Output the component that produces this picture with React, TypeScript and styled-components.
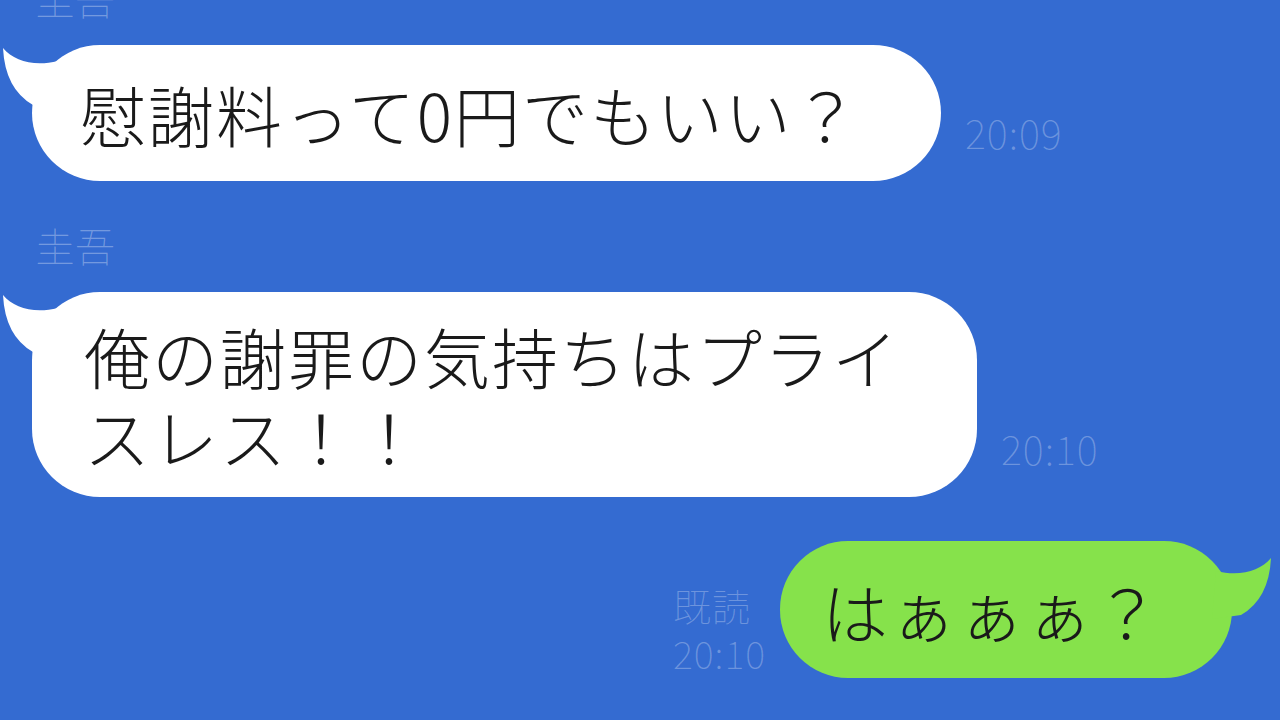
import React, { FC } from "react";
import styled, { createGlobalStyle } from "styled-components";

const Global = createGlobalStyle`
    html, body {
        margin: 0;
        padding: 0;
        width: 1280px;
        height: 720px;
        overflow: hidden;
        background: #346bd1;
    }
`

interface IBubble {
    $w: number,
    $h: number,
    $color: string,
    $padLeft: number,
}

interface ITail {
    $side: "left" | "right",
    $color: string,
}

const Tail: FC<ITail> = ({$side, $color}) => {
    return <TailSvg $side={$side} $color={$color} viewBox="0 0 70 70" width="70" height="70">
        <path d="M1 3 C 12 16, 32 22, 56 16 L 60 64 L 31 60 Q 3 44 1 3 Z" />
    </TailSvg>
}

const Chat: FC = () => {
    return <>
        <Global />
        <Page>
            <Message>
                <Name>圭吾</Name>
                <Line>
                    <Bubble $w={909} $h={136} $color="#ffffff" $padLeft={48}>
                        <Tail $side="left" $color="#ffffff" />
                        <Text>慰謝料って0円でもいい？</Text>
                    </Bubble>
                    <Time>20:09</Time>
                </Line>
            </Message>
            <Message>
                <Name>圭吾</Name>
                <Line>
                    <Bubble $w={945} $h={205} $color="#ffffff" $padLeft={52}>
                        <Tail $side="left" $color="#ffffff" />
                        <Text>俺の謝罪の気持ちはプライスレス！！</Text>
                    </Bubble>
                    <Time>20:10</Time>
                </Line>
            </Message>
            <Mine>
                <Read>
                    <span>既読</span>
                    <span>20:10</span>
                </Read>
                <Bubble $w={452} $h={137} $color="#86e24b" $padLeft={42}>
                    <Tail $side="right" $color="#86e24b" />
                    <Text>はぁぁぁ？</Text>
                </Bubble>
            </Mine>
        </Page>
    </>
}

const Page = styled.div`
    display: flex;
    flex-direction: column;
    gap: 44px;
    margin-top: -22px;
    padding: 0 48px 0 32px;
    font-family: "Noto Sans CJK JP", "Noto Sans", sans-serif;
`

const Message = styled.div`
    display: flex;
    flex-direction: column;
`

const Name = styled.div`
    font-size: 40px;
    line-height: 40px;
    font-weight: 100;
    color: rgba(255, 255, 255, 0.32);
    margin: 0 0 27px 3px;
`

const Line = styled.div`
    display: flex;
    align-items: flex-end;
    gap: 24px;
`

const Bubble = styled.div<IBubble>`
    position: relative;
    box-sizing: border-box;
    width: ${props => props.$w}px;
    height: ${props => props.$h}px;
    display: flex;
    align-items: center;
    padding: 0 30px 0 ${props => props.$padLeft}px;
    border-radius: 68px;
    background: ${props => props.$color};
`

const TailSvg = styled.svg<ITail>`
    position: absolute;
    top: ${props => props.$side === "left" ? 0 : 14}px;
    ${props => props.$side === "left" ? "left: -30px;" : "right: -40px; transform: scaleX(-1);"}
    fill: ${props => props.$color};
`

const Text = styled.div`
    position: relative;
    font-size: 66px;
    line-height: 80px;
    font-weight: 300;
    color: #1a1a1a;
    letter-spacing: 2px;
`

const Time = styled.div`
    font-size: 40px;
    line-height: 40px;
    font-weight: 100;
    color: rgba(255, 255, 255, 0.28);
    margin-bottom: 29px;
    letter-spacing: 1px;
`

const Mine = styled.div`
    display: flex;
    justify-content: flex-end;
    align-items: flex-end;
    gap: 14px;
`

const Read = styled.div`
    display: flex;
    flex-direction: column;
    gap: 10px;
    margin-bottom: 6px;
    font-size: 38px;
    line-height: 38px;
    font-weight: 100;
    color: rgba(255, 255, 255, 0.28);
    letter-spacing: 1px;
`

export default Chat;
